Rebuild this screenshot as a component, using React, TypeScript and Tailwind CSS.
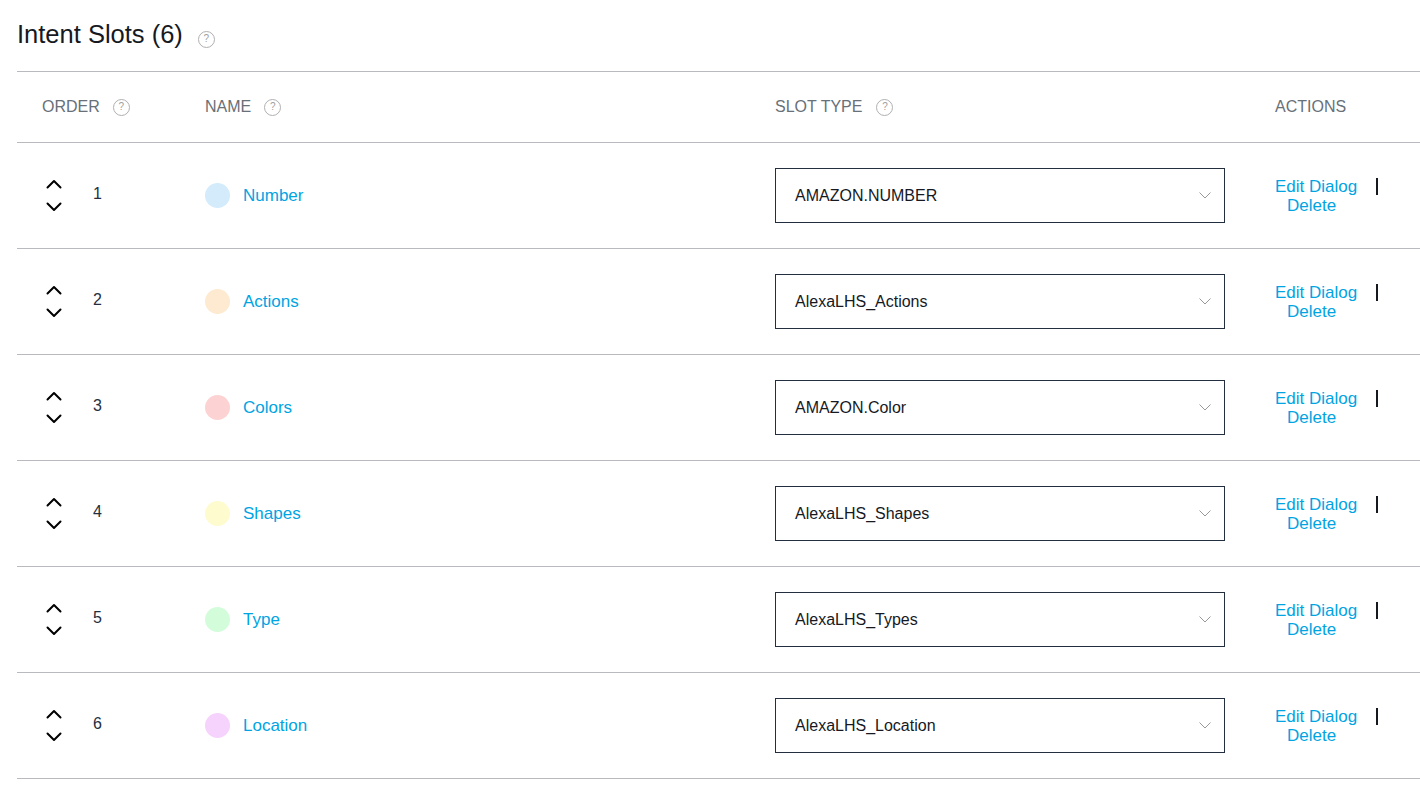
const slots = [
  { id: 1, name: 'Number', type: 'AMAZON.NUMBER', dot: 'bg-[#d3ebfb]' },
  { id: 2, name: 'Actions', type: 'AlexaLHS_Actions', dot: 'bg-[#fdead0]' },
  { id: 3, name: 'Colors', type: 'AMAZON.Color', dot: 'bg-[#fdd2d2]' },
  { id: 4, name: 'Shapes', type: 'AlexaLHS_Shapes', dot: 'bg-[#fefbcf]' },
  { id: 5, name: 'Type', type: 'AlexaLHS_Types', dot: 'bg-[#d3fcdb]' },
  { id: 6, name: 'Location', type: 'AlexaLHS_Location', dot: 'bg-[#f6d3fc]' },
];

function Help() {
  return (
    <span className="inline-flex h-[17px] w-[17px] items-center justify-center rounded-full border border-[#b0b0b0] text-[10px] leading-none text-[#a0a0a0]">
      ?
    </span>
  );
}

function Chevron({ up }: { up?: boolean }) {
  return (
    <svg width="16" height="10" viewBox="0 0 16 10" fill="none">
      <polyline
        points={up ? '1.5,8.5 8,2 14.5,8.5' : '1.5,1.5 8,8 14.5,1.5'}
        stroke="#000"
        strokeWidth="2"
        strokeLinecap="round"
        strokeLinejoin="round"
      />
    </svg>
  );
}

export default function App() {
  return (
    <div className="min-h-screen bg-white pl-[17px] font-['Liberation_Sans',Arial,sans-serif] text-[#16191f]">
      {/* Title */}
      <div className="flex h-[71px] items-center gap-[15px] pb-[2px]">
        <h1 className="text-[25.5px] leading-none text-[#16191f]">Intent Slots (6)</h1>
        <span className="mt-[5px]">
          <Help />
        </span>
      </div>

      {/* Table header */}
      <div className="flex h-[72px] items-center border-y border-[#b9b9c0] text-[16px] text-[#687078]">
        <div className="flex w-[188px] items-center gap-[13px] pl-[25px]">
          ORDER <Help />
        </div>
        <div className="flex w-[570px] items-center gap-[13px]">
          NAME <Help />
        </div>
        <div className="flex w-[500px] items-center gap-[14px]">
          SLOT TYPE <Help />
        </div>
        <div>ACTIONS</div>
      </div>

      {/* Rows */}
      {slots.map((slot) => (
        <div key={slot.id} className="flex h-[106px] items-center border-b border-[#b9b9c0] text-[16px]">
          <div className="flex w-[188px] items-center pl-[29px]">
            <div className="flex flex-col items-center gap-[13px]">
              <Chevron up />
              <Chevron />
            </div>
            <span className="ml-[31px] -mt-[4px] text-[#232f3e]">{slot.id}</span>
          </div>
          <div className="flex w-[570px] items-center gap-[13px]">
            <span className={`h-[25px] w-[25px] rounded-full ${slot.dot}`}></span>
            <span className="text-[17px] text-[#00a4e3]">{slot.name}</span>
          </div>
          <div className="w-[500px]">
            <div className="flex h-[55px] w-[450px] items-center justify-between border border-[#232f3e] pl-[19px] pr-[13px] text-[16px] text-[#16191f]">
              <span>{slot.type}</span>
              <svg width="12" height="7" viewBox="0 0 12 7" fill="none">
                <polyline points="0.5,0.5 6,6 11.5,0.5" stroke="#999" strokeWidth="1" />
              </svg>
            </div>
          </div>
          <div className="flex flex-col text-[17px] leading-[19px] text-[#00a4e3]">
            <div className="flex items-center">
              <span>Edit Dialog</span>
              <span className="ml-[19px] h-[17px] w-[2px] bg-[#16191f]"></span>
            </div>
            <span className="ml-[12px]">Delete</span>
          </div>
        </div>
      ))}
    </div>
  );
}
